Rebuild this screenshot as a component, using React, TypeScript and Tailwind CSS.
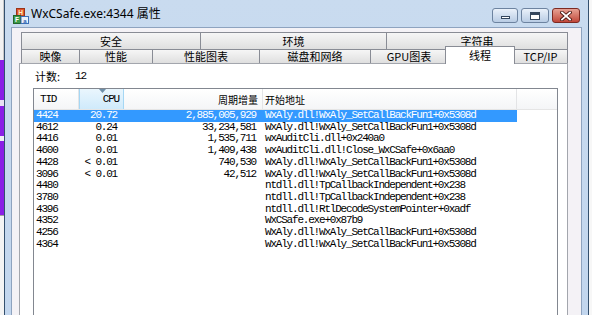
import React from "react";

// Process Explorer style "属性" dialog, threads tab

const threads = [
  { tid: "4424", cpu: "20.72", cycles: "2,885,005,929", addr: "WxAly.dll!WxAly_SetCallBackFun1+0x5308d" },
  { tid: "4612", cpu: "0.24", cycles: "33,234,581", addr: "WxAly.dll!WxAly_SetCallBackFun1+0x5308d" },
  { tid: "4416", cpu: "0.01", cycles: "1,535,711", addr: "wxAuditCli.dll+0x240a0" },
  { tid: "4600", cpu: "0.01", cycles: "1,409,438", addr: "wxAuditCli.dll!Close_WxCSafe+0x6aa0" },
  { tid: "4428", cpu: "< 0.01", cycles: "740,530", addr: "WxAly.dll!WxAly_SetCallBackFun1+0x5308d" },
  { tid: "3096", cpu: "< 0.01", cycles: "42,512", addr: "WxAly.dll!WxAly_SetCallBackFun1+0x5308d" },
  { tid: "4480", cpu: "", cycles: "", addr: "ntdll.dll!TpCallbackIndependent+0x238" },
  { tid: "3780", cpu: "", cycles: "", addr: "ntdll.dll!TpCallbackIndependent+0x238" },
  { tid: "4396", cpu: "", cycles: "", addr: "ntdll.dll!RtlDecodeSystemPointer+0xadf" },
  { tid: "4352", cpu: "", cycles: "", addr: "WxCSafe.exe+0x87b9" },
  { tid: "4256", cpu: "", cycles: "", addr: "WxAly.dll!WxAly_SetCallBackFun1+0x5308d" },
  { tid: "4364", cpu: "", cycles: "", addr: "WxAly.dll!WxAly_SetCallBackFun1+0x5308d" },
];

const topTabs = [
  { name: "安全", w: "w-[179px]" },
  { name: "环境", w: "w-[186px]" },
  { name: "字符串", w: "w-[182px]" },
];

const bottomTabs = [
  { name: "映像", w: "w-[58px]" },
  { name: "性能", w: "w-[73px]" },
  { name: "性能图表", w: "w-[107px]" },
  { name: "磁盘和网络", w: "w-[111px]" },
  { name: "GPU图表", w: "w-[77px]" },
  { name: "线程", w: "w-[70px]", active: true },
  { name: "TCP/IP", w: "w-[55px]" },
];

const mono = "font-['Liberation_Mono',monospace] text-[11px] tracking-[-1.2px]";
const cjk = "font-['Noto_Sans_CJK_SC',sans-serif]";

const AppIcon = () => (
  <svg width="16" height="16" viewBox="0 0 16 16">
    <rect x="3.5" y="0.5" width="8" height="7.5" fill="#e0542c" stroke="#9a3418" />
    <text x="7.5" y="6.8" fontSize="6.5" fontWeight="bold" fill="#fff3c0" textAnchor="middle" fontFamily="Liberation Sans">H</text>
    <rect x="0.5" y="7.5" width="7" height="8" fill="#3d9b48" stroke="#23662b" />
    <text x="4" y="14.2" fontSize="6.5" fontWeight="bold" fill="#fff" textAnchor="middle" fontFamily="Liberation Sans">F</text>
    <rect x="8" y="8.5" width="7.5" height="7" fill="#e8f0fb" stroke="#3c6fb8" />
    <text x="11.8" y="14.5" fontSize="6" fontWeight="bold" fill="#2d5fae" textAnchor="middle" fontFamily="Liberation Sans">a</text>
  </svg>
);

const CaptionButtons = () => (
  <div className="mt-[8px] flex gap-[3px]">
    <div className="flex h-[15px] w-[26px] items-end justify-center rounded-[3px] border border-[#6d83a0] bg-gradient-to-b from-[#eaf1fa] to-[#b9cce4] pb-[3px]">
      <div className="h-[3px] w-[9px] border border-[#35475e] bg-white" />
    </div>
    <div className="flex h-[15px] w-[28px] items-center justify-center rounded-[3px] border border-[#6d83a0] bg-gradient-to-b from-[#eaf1fa] to-[#b9cce4]">
      <div className="h-[8px] w-[10px] border border-t-[3px] border-[#35475e] bg-white" />
    </div>
    <div className="flex h-[15px] w-[28px] items-center justify-center rounded-[3px] border border-[#7d2a22] bg-gradient-to-b from-[#e6a194] to-[#c0463a]">
      <svg width="12" height="10" viewBox="0 0 12 10">
        <path d="M2 1.5 L10 8.5 M10 1.5 L2 8.5" stroke="#4a1712" strokeWidth="3.6" strokeLinecap="square" />
        <path d="M2 1.5 L10 8.5 M10 1.5 L2 8.5" stroke="#ffffff" strokeWidth="1.8" strokeLinecap="square" />
      </svg>
    </div>
  </div>
);

const Tab = ({ name, w, active, last }: { name: string; w: string; active?: boolean; last?: boolean }) =>
  active ? (
    <div
      className={`relative z-10 -mx-[2px] -mt-[3px] -mb-[1px] flex h-[18px] ${w} items-center justify-center border-x border-t border-[#898c95] bg-white text-[11px] text-black ${cjk}`}
    >
      {name}
    </div>
  ) : (
    <div
      className={`flex h-full ${w} items-center justify-center border-l border-t ${last ? "border-r" : ""} border-[#898c95] bg-gradient-to-b from-[#f6f6f6] to-[#dfdfdf] text-[11px] text-black ${cjk}`}
    >
      {name}
    </div>
  );

const App = () => {
  return (
    <div className="flex h-[315px] w-[592px] overflow-hidden bg-white">
      {/* background app peeking through on the left */}
      <div className="flex w-[4px] flex-col">
        <div className="h-[60px] border-r border-[#c8c8c8] bg-[#f2f2f2]" />
        <div className="h-[40px] bg-[#8a1ee6]" />
        <div className="h-[6px] bg-[#e8e0f4]" />
        <div className="h-[30px] bg-[#8a1ee6]" />
        <div className="h-[5px] bg-[#f0ecf6]" />
        <div className="h-[74px] bg-[#8a1ee6]" />
        <div className="flex-1 border-t border-[#a0a0a0] bg-[#f4f4f4]" />
      </div>

      {/* window */}
      <div className="flex w-[585px] flex-col border-x border-[#34506e] bg-gradient-to-b from-[#c9dbef] to-[#c2d6ee]">
        <div className="flex h-[27px] items-start pl-[8px] pr-[8px]">
          <div className="mt-[8px]">
            <AppIcon />
          </div>
          <span className="ml-[2px] mt-[5px] font-['Noto_Sans','Noto_Sans_CJK_SC',sans-serif] text-[12px] leading-[18px] text-black">
            WxCSafe.exe:4344 属性
          </span>
          <div className="flex-1" />
          <CaptionButtons />
        </div>

        {/* client area */}
        <div className="mx-[6px] flex flex-1 flex-col border-x border-t border-[#8ea3bf] bg-[#f4f2f6] pl-[7px] pr-[13px] pt-[4px]">
          {/* tab rows */}
          <div className="pl-[2px]">
            <div className="flex h-[17px]">
              {topTabs.map((t, i) => (
                <Tab key={t.name} name={t.name} w={t.w} last={i === topTabs.length - 1} />
              ))}
            </div>
            <div className="flex h-[14px] items-start">
              {bottomTabs.map((t, i) => (
                <Tab key={t.name} name={t.name} w={t.w} active={t.active} last={i === bottomTabs.length - 1} />
              ))}
            </div>
          </div>

          {/* tab page */}
          <div className="flex flex-1 flex-col border-x border-t border-[#a3a6ad] bg-white pl-[13px] pr-[9px]">
            <div className={`flex h-[24px] items-center pl-[2px] text-[11px] text-black ${cjk}`}>
              <span className="w-[40px]">计数:</span>
              <span className={mono}>12</span>
            </div>

            {/* thread list */}
            <div className="flex-1 border-x border-t border-[#828790] bg-white">
              <div className="flex h-[21px] border-b border-[#e5e5e5] bg-gradient-to-b from-white to-[#f4f5f7] text-black">
                <div className={`flex w-[45px] items-center border-r border-[#e3e4e6] pl-[6px] ${mono}`}>TID</div>
                <div className="relative flex w-[45px] items-center justify-end border-x border-[#a5d7f4] bg-gradient-to-b from-[#eaf6fd] to-[#cfeafb] pr-[4px]">
                  <svg className="absolute left-[19px] top-0" width="7" height="4" viewBox="0 0 7 4">
                    <path d="M0 0 L7 0 L3.5 4 Z" fill="#6f8fa8" />
                  </svg>
                  <span className={mono}>CPU</span>
                </div>
                <div className={`flex w-[139px] items-center justify-end border-r border-[#e3e4e6] pr-[4px] text-[10px] ${cjk}`}>
                  周期增量
                </div>
                <div className={`flex w-[254px] items-center border-r border-[#e3e4e6] pl-[2px] text-[10px] ${cjk}`}>
                  开始地址
                </div>
                <div className="flex-1" />
              </div>

              {threads.map((t, i) => (
                <div key={t.tid} className="flex">
                  <div
                    className={`flex h-[11.73px] w-[483px] items-center leading-[11.73px] ${mono} ${
                      i === 0 ? "bg-[#3399ff] text-white" : "text-black"
                    }`}
                  >
                    <div className="w-[45px] pl-[2px]">{t.tid}</div>
                    <div className="w-[45px] whitespace-pre pr-[7px] text-right">{t.cpu}</div>
                    <div className="w-[139px] pr-[7px] text-right">{t.cycles}</div>
                    <div className="w-[254px] whitespace-nowrap pl-[2px]">{t.addr}</div>
                  </div>
                </div>
              ))}
            </div>
          </div>
        </div>
      </div>

      {/* background on the right */}
      <div className="w-[3px] bg-[#f7f7f7]" />
    </div>
  );
};

export default App;
